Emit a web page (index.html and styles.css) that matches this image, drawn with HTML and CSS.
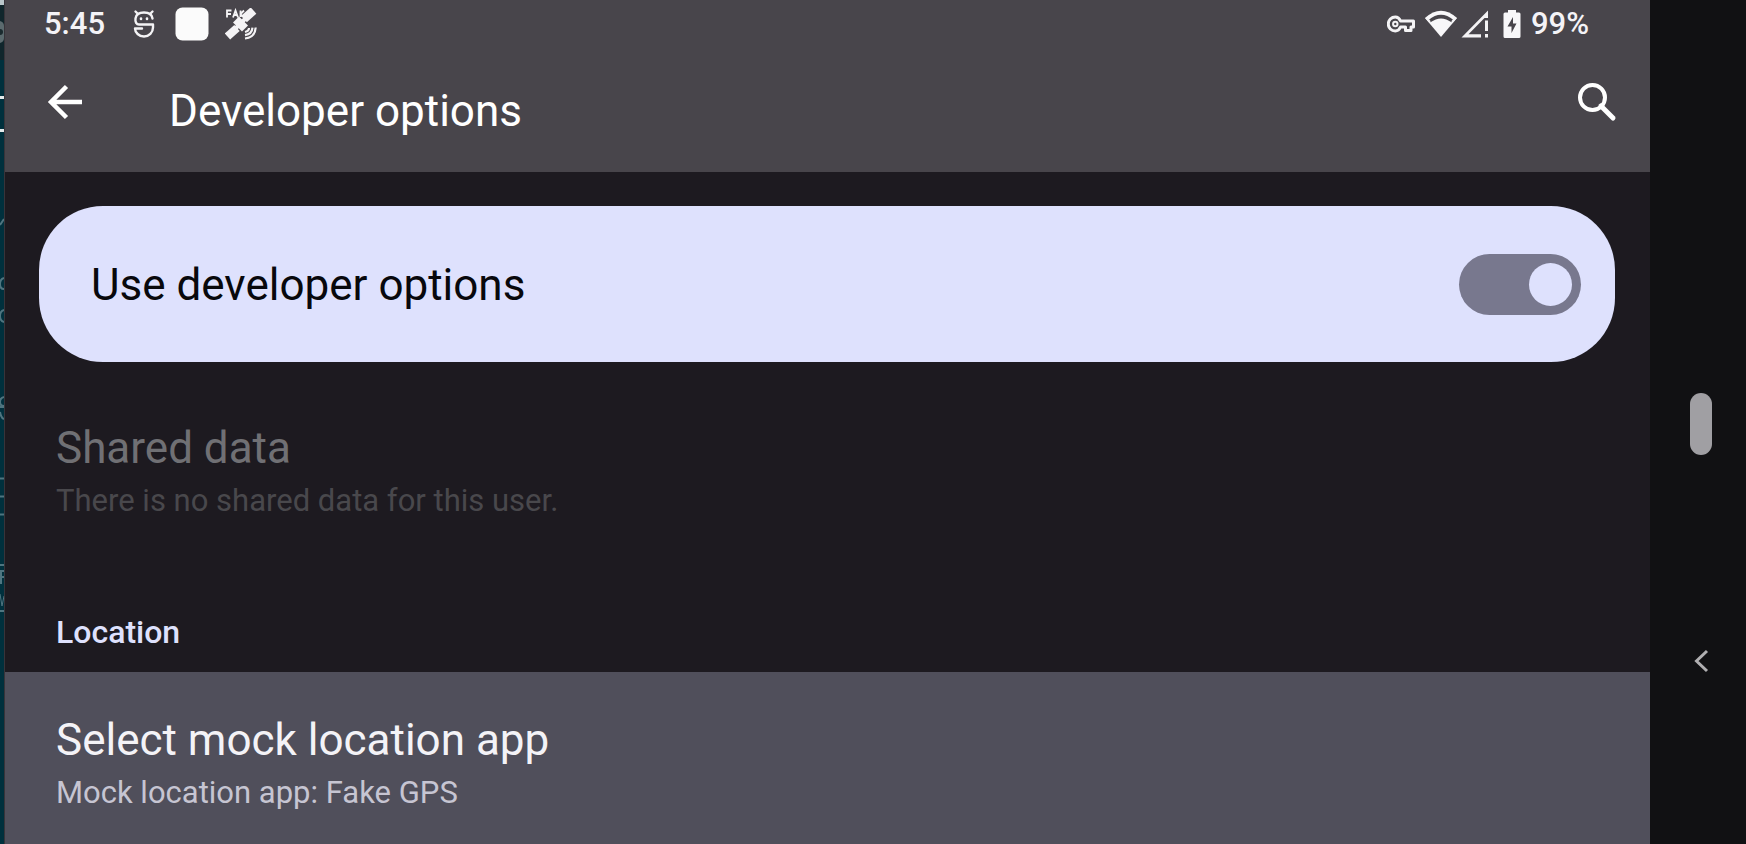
FILE: index.html
```html
<!DOCTYPE html>
<html lang="en">
<head>
<meta charset="utf-8">
<meta name="viewport" content="width=device-width, initial-scale=1">
<title>Developer options</title>
<link rel="stylesheet" href="styles.css">
</head>
<body>
<div class="desktop">
  <div class="backdrop" aria-hidden="true">
    <svg class="backdrop-art" width="4" height="844" viewBox="0 0 4 844">
      <rect width="4" height="5" fill="#b9c6ca"/>
      <rect y="5" width="4" height="55" fill="#10262c"/>
      <path d="M0 21Q4 22 4 26V38Q4 42 0 43Z" fill="#5b6a6e"/>
      <circle cx="0" cy="32" r="3" fill="#1a2a2e"/>
      <path d="M0 97.500h4M0 130.500h4" stroke="#e4eaeb" stroke-width="3"/>
      <g fill="none" stroke="#4f7580" stroke-width="2">
        <path d="M0 225l4-6M4 278q-4 1-4 6t4 5M4 310q-4 1-4 6t4 6M4 397q-4 1-4 5t4 4M0 407h4M0 412q1 6 4 7"/>
        <path d="M0 478.500h4M0 496.500h4M0 514.500h4M0 565h4M0 611h4"/>
        <path d="M1 584v-13h3M1 577h3"/>
        <path d="M0 594l2 12 2-10" stroke-width="1"/>
      </g>
    </svg>
  </div>

  <div class="screen">
    <header class="top">
      <div class="status">
        <div class="status-side status-start">
          <span class="clock">5:45</span>
          <svg class="ic-mask" width="22" height="30" viewBox="0 0 22 30" fill="none" stroke="#f4f3f5" stroke-width="2.400" stroke-linecap="round" stroke-linejoin="round">
            <path d="M2.500 2.500L5 5M19.500 2.500L17 5"/>
            <path d="M19.500 9.500C19 5.500 15.500 3.500 11 3.500S3 5.500 2.500 9.500C2 13 3.500 15.500 6 15.500H20V18.500C20 23.500 16 27.500 11 27.500S2 23.500 2 19.500H9"/>
            <path d="M8 9.500v.5M14 9.500v.5" stroke-width="2.600"/>
          </svg>
          <svg class="ic-square" width="34" height="34" viewBox="0 0 34 34"><rect x=".5" y=".5" width="33" height="33" rx="7" fill="#fbfbfb"/></svg>
          <svg class="ic-sat" width="32" height="32" viewBox="0 0 32 32" fill="none" stroke="#f4f3f5">
            <path d="M2 9.500V2.500H6.500M2 6H6M8 9.500L10.500 2.500 13 9.500M9 7H12M15.500 2.500V9M19 2.500L15.500 6 18 9" stroke-width="1.800"/>
            <path d="M19 11L28.500 2.500" stroke-width="8.500"/>
            <path d="M2.500 28.500L12 20" stroke-width="8"/>
            <path d="M11 11.500L20 20.500" stroke-width="8.500"/>
            <path d="M9 22L22 9" stroke-width="4"/>
            <path d="M20 24q4-1 4-4M20 27.200q7-1 7.500-7.500M20 30.500q10-1 10.700-11" stroke-width="2.200"/>
          </svg>
        </div>
        <div class="status-side status-end">
          <svg class="ic-key" width="28" height="18" viewBox="0 0 28 18" fill="none" stroke="#f4f3f5" stroke-width="3">
            <path d="M13.500 6H26.500V12H24V15.500H18.500V12H13.500C12.300 14.800 10.500 16 8.300 16A7 7 0 0 1 8.300 2C10.500 2 12.300 3.200 13.500 6Z" stroke-linejoin="round"/>
            <circle cx="8.300" cy="9" r="2.200" stroke-width="2"/>
          </svg>
          <svg class="ic-wifi" width="32" height="28" viewBox="0 0 32 28">
            <path d="M0 8Q16-6.500 32 8L16 27Z" fill="#f8f7f9"/>
            <path d="M3.500 10Q16-.5 28.500 10L26.500 12.300Q16 4.500 5.500 12.300Z" fill="#48454b"/>
            <path d="M1 7.500L5 12M31 7.500L27 12" stroke="#f4f3f5" stroke-width="2"/>
          </svg>
          <svg class="ic-signal" width="28" height="28" viewBox="0 0 28 28">
            <path d="M27 .5V8H23.500L7.500 24.200H20V27.500H.5Z" fill="#f4f3f5"/>
            <path d="M25.500 10.500V21M25.500 24V27.500" stroke="#f4f3f5" stroke-width="3"/>
          </svg>
          <svg class="ic-battery" width="18" height="28" viewBox="0 0 18 28">
            <path d="M5 0H13V2.500H16Q17.500 2.500 17.500 4V26.500Q17.500 28 16 28H2Q.5 28 .5 26.500V4Q.5 2.500 2 2.500H5Z" fill="#f8f7f9"/>
            <path d="M10 7L4.500 16.500H8.500V23L13.500 13.500H10Z" fill="#48454b"/>
          </svg>
          <span class="percent">99%</span>
        </div>
      </div>
      <div class="appbar">
        <button class="icon-btn back" type="button" aria-label="Navigate up">
          <svg width="36" height="36" viewBox="0 0 36 36" fill="none" stroke="#fff" stroke-width="4.500"><path d="M35 18H4M19.500 2.500L4 18L19.500 33.500"/></svg>
        </button>
        <h1 class="title">Developer options</h1>
        <button class="icon-btn search" type="button" aria-label="Search">
          <svg width="40" height="40" viewBox="0 0 40 40" fill="none" stroke="#fff"><circle cx="15.500" cy="15.500" r="12.500" stroke-width="4"/><path d="M24 24L36 36" stroke-width="5" stroke-linecap="round"/></svg>
        </button>
      </div>
    </header>

    <main class="content">
      <label class="main-switch">
        <span class="switch-label">Use developer options</span>
        <input class="switch" type="checkbox" role="switch" checked>
      </label>
      <section class="pref disabled">
        <h2 class="pref-title">Shared data</h2>
        <p class="pref-summary">There is no shared data for this user.</p>
      </section>
      <h2 class="category">Location</h2>
      <button class="pref highlighted" type="button">
        <span class="pref-title">Select mock location app</span>
        <span class="pref-summary">Mock location app: Fake GPS</span>
      </button>
    </main>
  </div>

  <nav class="navbar" aria-label="System navigation">
    <button class="nav-home" type="button" aria-label="Home"></button>
    <button class="nav-back" type="button" aria-label="Back">
      <svg width="16" height="24" viewBox="0 0 16 24" fill="none" stroke="#b0afb1" stroke-width="3"><path d="M14 2L3.500 12L14 22"/></svg>
    </button>
  </nav>
</div>
</body>
</html>
```
FILE: styles.css
```css
* {
  box-sizing: border-box;
}

body {
  margin: 0;
  background: #111113;
  font-family: Roboto, "Open Sans", sans-serif;
  color: #f4f3f7;
}

h1,
h2,
p {
  margin: 0;
  font-weight: 400;
}

button {
  border: 0;
  padding: 0;
  background: none;
  color: inherit;
  font: inherit;
  cursor: pointer;
}

svg {
  display: block;
  flex: none;
}

.desktop {
  display: flex;
  min-height: 100vh;
}

.backdrop {
  position: relative;
  flex: none;
  width: 4px;
  overflow: hidden;
  background: #00303d;
}

.backdrop-art {
  position: absolute;
  top: 0;
  left: 0;
}

.screen {
  flex: 1;
  display: flex;
  flex-direction: column;
  min-width: 0;
  background: #1d1a20;
  border-left: 1px solid #38343a;
}

.top {
  background: #48454b;
  padding-bottom: 10px;
}

.status {
  display: flex;
  justify-content: space-between;
  height: 48px;
  padding: 0 61px 0 39px;
}

.status-side {
  display: flex;
  align-items: center;
}

.clock,
.percent {
  font-size: 31px;
  font-weight: 500;
  line-height: 48px;
}

.percent {
  margin-left: 10px;
}

.ic-mask {
  margin-left: 28px;
}

.ic-square {
  margin-left: 20px;
}

.ic-sat {
  margin-left: 16px;
}

.ic-wifi {
  margin-left: 10px;
}

.ic-signal {
  margin-left: 4px;
}

.ic-battery {
  margin-left: 14px;
}

.appbar {
  display: flex;
  align-items: center;
  padding: 12px 29px 0 39px;
}

.icon-btn {
  display: flex;
  align-items: center;
  justify-content: center;
  width: 48px;
  height: 48px;
  margin-bottom: 18px;
}

.back {
  justify-content: flex-start;
  padding-left: 3px;
}

.title {
  flex: 1;
  margin-left: 77px;
  padding: 24px 0;
  color: #fff;
  font-size: 44px;
  line-height: 54px;
}

.content {
  flex: 1;
  display: flex;
  flex-direction: column;
  padding-top: 34px;
}

.main-switch {
  display: flex;
  align-items: center;
  justify-content: space-between;
  min-height: 156px;
  margin: 0 35px 0 34px;
  padding: 0 34px 0 52px;
  border-radius: 64px;
  background: #dee1fd;
  color: #08080c;
  cursor: pointer;
}

.switch-label {
  padding-top: 2px;
  font-size: 44px;
  line-height: 56px;
}

.switch {
  appearance: none;
  display: flex;
  align-items: center;
  justify-content: flex-end;
  width: 122px;
  height: 61px;
  margin: 0;
  padding: 9px;
  border-radius: 31px;
  background: #78788e;
}

.switch::before {
  content: "";
  width: 43px;
  height: 43px;
  border-radius: 50%;
  background: #dee1fd;
}

.switch:not(:checked) {
  justify-content: flex-start;
}

.pref {
  display: flex;
  flex-direction: column;
  padding: 40px 51px;
  text-align: left;
}

.pref-title {
  font-size: 44px;
  line-height: 56px;
}

.pref-summary {
  font-size: 31px;
  line-height: 50px;
}

.disabled {
  padding-top: 58px;
  color: #707074;
}

.disabled .pref-summary {
  color: #49484c;
}

.category {
  padding: 46px 51px 20px;
  color: #dee1fd;
  font-size: 32px;
  font-weight: 500;
  line-height: 40px;
}

.highlighted {
  flex: 1;
  justify-content: flex-start;
  background: #504f5b;
}

.highlighted .pref-summary {
  color: #c6c5d2;
}

.navbar {
  flex: none;
  display: flex;
  flex-direction: column;
  align-items: center;
  width: 96px;
  padding: 393px 0 0 6px;
  background: #111113;
}

.nav-home {
  width: 22px;
  height: 62px;
  border-radius: 11px;
  background: #a09fa3;
}

.nav-back {
  margin-top: 194px;
}
```
